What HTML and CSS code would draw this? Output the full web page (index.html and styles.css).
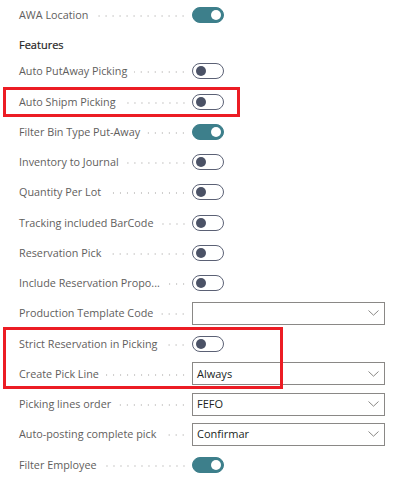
FILE: index.html
```html
<!DOCTYPE html>
<html lang="en">
<head>
<meta charset="utf-8">
<title>Features</title>
<link rel="stylesheet" href="styles.css">
</head>
<body>
<div class="page">
  <div class="row row-first">
    <div class="label"><span class="text">AWA Location</span><span class="leader"></span></div>
    <div class="control"><span class="toggle on"></span></div>
  </div>
  <div class="section">Features</div>
  <div class="row">
    <div class="label"><span class="text">Auto PutAway Picking</span><span class="leader"></span></div>
    <div class="control"><span class="toggle"></span></div>
  </div>
  <div class="row marked">
    <div class="label"><span class="text">Auto Shipm Picking</span><span class="leader"></span></div>
    <div class="control"><span class="toggle"></span></div>
  </div>
  <div class="row">
    <div class="label"><span class="text">Filter Bin Type Put-Away</span><span class="leader"></span></div>
    <div class="control"><span class="toggle on"></span></div>
  </div>
  <div class="row">
    <div class="label"><span class="text">Inventory to Journal</span><span class="leader"></span></div>
    <div class="control"><span class="toggle"></span></div>
  </div>
  <div class="row">
    <div class="label"><span class="text">Quantity Per Lot</span><span class="leader"></span></div>
    <div class="control"><span class="toggle"></span></div>
  </div>
  <div class="row">
    <div class="label"><span class="text">Tracking included BarCode</span><span class="leader"></span></div>
    <div class="control"><span class="toggle"></span></div>
  </div>
  <div class="row">
    <div class="label"><span class="text">Reservation Pick</span><span class="leader"></span></div>
    <div class="control"><span class="toggle"></span></div>
  </div>
  <div class="row">
    <div class="label"><span class="text">Include Reservation Propo...</span><span class="leader"></span></div>
    <div class="control"><span class="toggle"></span></div>
  </div>
  <div class="row">
    <div class="label"><span class="text">Production Template Code</span><span class="leader"></span></div>
    <div class="control"><div class="select"><span class="value"></span><svg class="chev" width="11" height="6" viewBox="0 0 11 6"><path d="M0.5 0.5 L5.5 5.2 L10.5 0.5" fill="none" stroke="#8a8886" stroke-width="1"/></svg></div></div>
  </div>
  <div class="group marked-group">
    <div class="row">
      <div class="label"><span class="text">Strict Reservation in Picking</span><span class="leader"></span></div>
      <div class="control"><span class="toggle"></span></div>
    </div>
    <div class="row">
      <div class="label"><span class="text">Create Pick Line</span><span class="leader"></span></div>
      <div class="control"><div class="select"><span class="value">Always</span><svg class="chev" width="11" height="6" viewBox="0 0 11 6"><path d="M0.5 0.5 L5.5 5.2 L10.5 0.5" fill="none" stroke="#8a8886" stroke-width="1"/></svg></div></div>
    </div>
  </div>
  <div class="row">
    <div class="label"><span class="text">Picking lines order</span><span class="leader"></span></div>
    <div class="control"><div class="select"><span class="value">FEFO</span><svg class="chev" width="11" height="6" viewBox="0 0 11 6"><path d="M0.5 0.5 L5.5 5.2 L10.5 0.5" fill="none" stroke="#8a8886" stroke-width="1"/></svg></div></div>
  </div>
  <div class="row">
    <div class="label"><span class="text">Auto-posting complete pick</span><span class="leader"></span></div>
    <div class="control"><div class="select"><span class="value">Confirmar</span><svg class="chev" width="11" height="6" viewBox="0 0 11 6"><path d="M0.5 0.5 L5.5 5.2 L10.5 0.5" fill="none" stroke="#8a8886" stroke-width="1"/></svg></div></div>
  </div>
  <div class="row">
    <div class="label"><span class="text">Filter Employee</span><span class="leader"></span></div>
    <div class="control"><span class="toggle on"></span></div>
  </div>
</div>
</body>
</html>
```
FILE: styles.css
```css
html, body {
  margin: 0;
  padding: 0;
  background: #ffffff;
}
body {
  font-family: "Open Sans", "Noto Sans", sans-serif;
  font-size: 10.8px;
  color: #5f5e5d;
}
.page {
  width: 412px;
  height: 482px;
  overflow: hidden;
}
.row {
  position: relative;
  display: grid;
  grid-template-columns: 173px 193px;
  align-items: center;
  height: 30.25px;
  padding-left: 19px;
}
.row-first {
  height: 29.25px;
}
.label {
  display: flex;
  align-items: center;
  min-width: 0;
  padding-right: 5px;
}
.text {
  white-space: nowrap;
  line-height: 16px;
}
.leader {
  flex: 1;
  height: 4px;
  margin-left: 7px;
  margin-top: 2px;
  background-image: radial-gradient(circle, #cdcccb 0.75px, transparent 1px);
  background-size: 7px 4px;
  background-position: right center;
  background-repeat: repeat-x;
}
.section {
  height: 27px;
  box-sizing: border-box;
  padding: 8px 0 3px 19px;
  line-height: 16px;
  font-size: 11px;
  font-weight: 400;
  color: #252423;
  -webkit-text-stroke: 0.2px #252423;
}
.control {
  display: flex;
  align-items: center;
}
.toggle {
  position: relative;
  box-sizing: border-box;
  width: 32px;
  height: 16px;
  border-radius: 8px;
  border: 1px solid #5b6175;
  background: #ffffff;
}
.toggle::after {
  content: "";
  position: absolute;
  top: 2px;
  left: 3px;
  width: 10px;
  height: 10px;
  border-radius: 50%;
  background: #4b5266;
}
.toggle.on {
  background: #3d7f8b;
  border-color: #3d7f8b;
}
.toggle.on::after {
  left: auto;
  right: 2px;
  background: #ffffff;
}
.select {
  box-sizing: border-box;
  width: 193px;
  height: 23px;
  border: 1px solid #8a8886;
  display: flex;
  align-items: center;
  justify-content: space-between;
  padding: 0 5px 0 4px;
}
.value {
  font-size: 11px;
  color: #201f1e;
  line-height: 16px;
}
.chev {
  display: block;
}
.marked::after {
  content: "";
  position: absolute;
  top: 0;
  bottom: 0;
  left: 3px;
  width: 237px;
  box-sizing: border-box;
  border: 3px solid #ec1c24;
  pointer-events: none;
}
.group {
  position: relative;
}
.marked-group::after {
  content: "";
  position: absolute;
  top: -2px;
  bottom: 0;
  left: 3px;
  width: 280px;
  box-sizing: border-box;
  border: 3px solid #ec1c24;
  pointer-events: none;
}
```
